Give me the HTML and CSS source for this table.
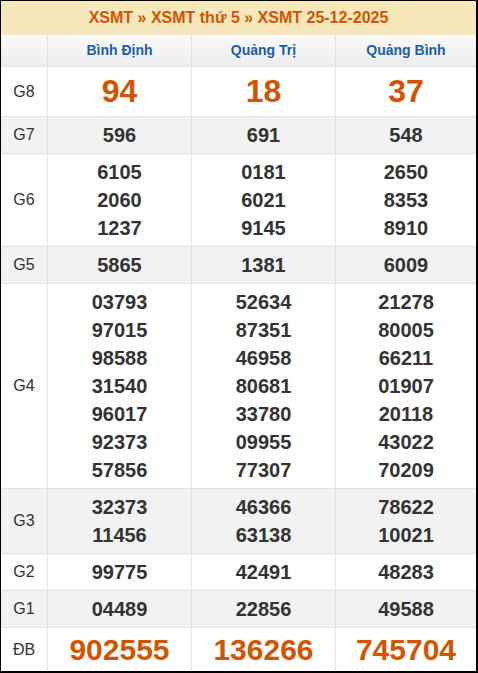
FILE: index.html
```html
<!DOCTYPE html>
<html lang="vi">
<head>
<meta charset="utf-8">
<title>XSMT 25-12-2025</title>
<link rel="stylesheet" href="styles.css">
</head>
<body>
<div class="box">
  <h2 class="title">XSMT » XSMT thứ 5 » XSMT 25-12-2025</h2>
  <div class="grid">
    <div class="cell head"></div>
    <div class="cell head prov">Bình Định</div>
    <div class="cell head prov">Quảng Trị</div>
    <div class="cell head prov">Quảng Bình</div>

    <div class="cell lbl g8">G8</div>
    <div class="cell num big g8">94</div>
    <div class="cell num big g8">18</div>
    <div class="cell num big g8">37</div>

    <div class="cell lbl alt">G7</div>
    <div class="cell num alt">596</div>
    <div class="cell num alt">691</div>
    <div class="cell num alt">548</div>

    <div class="cell lbl">G6</div>
    <div class="cell num"><span>6105</span><span>2060</span><span>1237</span></div>
    <div class="cell num"><span>0181</span><span>6021</span><span>9145</span></div>
    <div class="cell num"><span>2650</span><span>8353</span><span>8910</span></div>

    <div class="cell lbl alt">G5</div>
    <div class="cell num alt">5865</div>
    <div class="cell num alt">1381</div>
    <div class="cell num alt">6009</div>

    <div class="cell lbl">G4</div>
    <div class="cell num"><span>03793</span><span>97015</span><span>98588</span><span>31540</span><span>96017</span><span>92373</span><span>57856</span></div>
    <div class="cell num"><span>52634</span><span>87351</span><span>46958</span><span>80681</span><span>33780</span><span>09955</span><span>77307</span></div>
    <div class="cell num"><span>21278</span><span>80005</span><span>66211</span><span>01907</span><span>20118</span><span>43022</span><span>70209</span></div>

    <div class="cell lbl alt">G3</div>
    <div class="cell num alt"><span>32373</span><span>11456</span></div>
    <div class="cell num alt"><span>46366</span><span>63138</span></div>
    <div class="cell num alt"><span>78622</span><span>10021</span></div>

    <div class="cell lbl">G2</div>
    <div class="cell num">99775</div>
    <div class="cell num">42491</div>
    <div class="cell num">48283</div>

    <div class="cell lbl alt">G1</div>
    <div class="cell num alt">04489</div>
    <div class="cell num alt">22856</div>
    <div class="cell num alt">49588</div>

    <div class="cell lbl db last">ĐB</div>
    <div class="cell num big db last">902555</div>
    <div class="cell num big db last">136266</div>
    <div class="cell num big db last">745704</div>
  </div>
</div>
</body>
</html>
```
FILE: styles.css
```css
html, body {
  margin: 0;
  padding: 0;
  background: #fff;
}
body {
  font-family: "Liberation Sans", Arial, sans-serif;
  color: #333;
}
.box {
  width: 478px;
  height: 673px;
  box-sizing: border-box;
  border-top: 1px solid #000;
  border-left: 1px solid #000;
  border-right: 2px solid #000;
  border-bottom: 2px solid #000;
  overflow: hidden;
}
.title {
  margin: 0;
  height: 34px;
  line-height: 34px;
  background: #f7e8bc;
  color: #d35400;
  font-size: 16px;
  font-weight: bold;
  text-align: center;
}
.grid {
  display: grid;
  grid-template-columns: 47px 144px 144px 1fr;
}
.cell {
  box-sizing: border-box;
  border-bottom: 1px solid #e2e2e2;
  border-right: 1px solid #e2e2e2;
  padding: 4px 0;
  display: flex;
  flex-direction: column;
  align-items: center;
  justify-content: center;
}
.cell:nth-child(4n) {
  border-right: 0;
}
.head {
  padding: 0;
  height: 32px;
  background: linear-gradient(#fafafa, #ededed);
}
.prov {
  color: #1a5ea8;
  font-weight: bold;
  font-size: 14px;
  line-height: 31px;
}
.lbl {
  font-size: 16px;
  color: #333;
}
.num {
  font-weight: bold;
  font-size: 20px;
  line-height: 28px;
  color: #333;
}
.num span {
  display: block;
}
.alt {
  background: #f2f2f2;
}
.big {
  color: #d35400;
}
.g8 {
  min-height: 50px;
}
.g8.big {
  font-size: 32px;
  line-height: 41px;
}
.db.big {
  font-size: 30px;
  line-height: 35px;
}
.last {
  border-bottom: 0;
  min-height: 43px;
}
```
